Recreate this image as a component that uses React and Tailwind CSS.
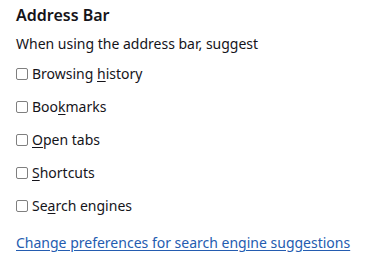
import React from "react";

const options = [
  { before: "Browsing ", key: "h", after: "istory" },
  { before: "Boo", key: "k", after: "marks" },
  { before: "", key: "O", after: "pen tabs" },
  { before: "", key: "S", after: "hortcuts" },
  { before: "Se", key: "a", after: "rch engines" },
];

const App = () => {
  return (
    <div
      className="w-[372px] h-[264px] bg-white pl-4 pt-[3px] text-[#15141a] overflow-hidden"
      style={{ fontFamily: '"Segoe UI", "Noto Sans", sans-serif' }}
    >
      <h2 className="text-[16px] font-semibold leading-[24px]">Address Bar</h2>
      <p className="mt-[7px] text-[14px] leading-[20px]">When using the address bar, suggest</p>

      <div className="mt-[10px] flex flex-col gap-[13px]">
        {options.map((opt) => (
          <label key={opt.before + opt.key} className="flex items-center h-[20px] text-[14px] leading-[20px]">
            <span className="w-[12px] h-[12px] border-[1.5px] border-[#7f7f7f] rounded-[2px] bg-white mr-[4px] shrink-0" />
            <span>
              {opt.before}
              <span className="underline underline-offset-2">{opt.key}</span>
              {opt.after}
            </span>
          </label>
        ))}
      </div>

      <a href="#" className="block mt-[17px] text-[14px] leading-[20px] text-[#245cb0] underline underline-offset-2">
        Change preferences for search engine suggestions
      </a>
    </div>
  );
};

export default App;
